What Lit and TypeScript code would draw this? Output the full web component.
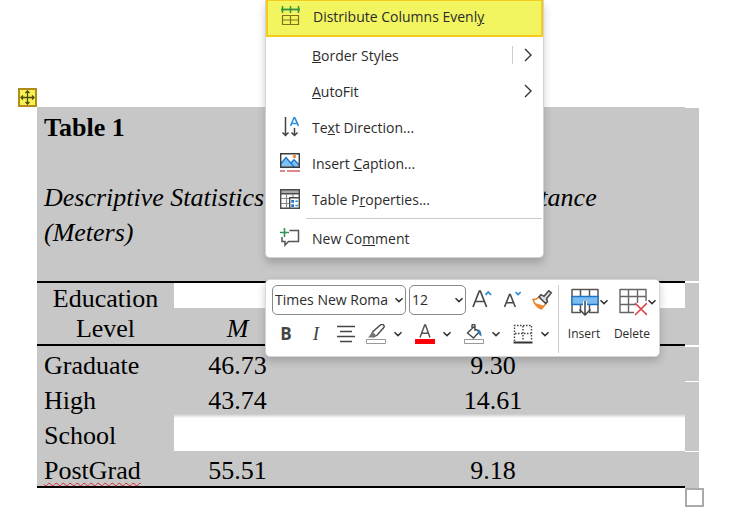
import { LitElement, html, svg, css, nothing, TemplateResult } from "lit";
import { customElement } from "lit/decorators.js";

const chevronDown = html`<svg class="chev" width="10" height="8" viewBox="0 0 10 8"><path d="M1.500 2.200 5 5.600l3.500-3.400" fill="none" stroke="#333" stroke-width="1.500"/></svg>`;
const chevronRight = html`<svg width="8" height="14" viewBox="0 0 8 14"><path d="M1 1l6 6-6 6" fill="none" stroke="#333" stroke-width="1.400"/></svg>`;

const icon = (size: number, body: TemplateResult<2>) =>
  html`<svg width=${size} height=${size} viewBox="0 0 ${size} ${size}" fill="none" aria-hidden="true">${body}</svg>`;

const distributeIcon = icon(20, svg`
  <path d="M0 3.500h19" stroke="#2f9440" stroke-width="1.800"/>
  <path d="M1.500 0v7M9.500 0v7M17.500 0v7" stroke="#2f9440" stroke-width="1.500"/>
  <path d="M1.500 9.500h16v9h-16zM9.500 9.500v9M1.500 14h16" stroke="#83741c" stroke-width="1.200"/>`);

const directionIcon = icon(20, svg`
  <path d="M5.500 0v18.500M2.500 15.500l3 3 3-3" stroke="#444" stroke-width="1.500"/>
  <path d="M14.500 11v7.500M11.500 15.500l3 3 3-3" stroke="#444" stroke-width="1.500"/>
  <path d="M10.500 9 14 .8h.8L18.500 9M11.800 6.500h5.400" stroke="#2f8fd6" stroke-width="1.600"/>`);

const captionIcon = icon(20, svg`
  <path d="M1 13.500V10l5-6 8.500 10H1z" fill="#7fc0f2"/><path d="M11 9.500l3-3 5 5V14h-4z" fill="#7fc0f2"/>
  <path d="M1 10.500l5-6 8.300 9.500M11 10l3-3.200 5 5" stroke="#1c74c4" stroke-width="1.300"/>
  <circle cx="14.500" cy="3.500" r="1.700" fill="#ee8b3a"/>
  <path d="M.7.700h18.600v13.600H.700z" stroke="#3b3b3b" stroke-width="1.400"/>
  <path d="M0 18h5M7 18h13" stroke="#d3606b" stroke-width="1.600"/>`);

const propertiesIcon = icon(20, svg`
  <path d="M1 1h18v3.500H1z" fill="#aaa"/>
  <path d="M.7.700h18.600v18.600H.700zM.7 4.700h18.600" stroke="#4a4a4a" stroke-width="1.400"/>
  <path d="M1 9.500h9M1 14.500h9M6.500 5v14M13 5v4" stroke="#888" stroke-width="1.200"/>
  <path d="M9 8h11v12H9z" fill="#fff"/>
  <path d="M9.700 8.700h9.600v10.600H9.700z" fill="#fff" stroke="#4a4a4a" stroke-width="1.400"/>
  <path d="M11.300 11h2.700v2.700h-2.700zM11.300 15.200h2.700v2.700h-2.700z" fill="#1c74c4"/>
  <path d="M15.300 12.300h2.700M15.300 16.500h2.700" stroke="#3a93dd" stroke-width="1.600"/>`);

const commentIcon = icon(20, svg`
  <path d="M9.500 2.500h9v11h-10l-3.500 3.700v-3.700H2V9" stroke="#555" stroke-width="1.500"/>
  <path d="M4.500 0v9M0 4.500h9" stroke="#34915a" stroke-width="1.600"/>`);

const growIcon = icon(22, svg`
  <path d="M2 18 8.300 2h1l6.300 16M4.400 12.500h8.800" stroke="#484848" stroke-width="1.700"/>
  <path d="M14.500 5.800 17.200 3 20 5.800" stroke="#2a8ad4" stroke-width="1.700"/>`);
const shrinkIcon = icon(22, svg`
  <path d="M3.500 18 8.500 5.500h.8l5 12.500M5.300 13.800h7.200" stroke="#484848" stroke-width="1.600"/>
  <path d="M14.500 3l2.600 2.600L19.700 3" stroke="#2a8ad4" stroke-width="1.700"/>`);
const brushIcon = icon(22, svg`
  <path d="M2 10.500c3 0 4.500-.8 6-2.500l7 6.500-4.500 5.500C6 18.500 3.500 15 2 10.500z" fill="#fff" stroke="#e5802c" stroke-width="1.500"/>
  <path d="M4 14l8.500 2.500-2 3.500C7.500 19 5.500 17 4 14z" fill="#ee8b2d"/>
  <path d="M8 8l2-2.300 3 1.600 4.800-5.600 2.500 2.200-4.800 5.800 1 2.800-1.800 2z" fill="#ddd" stroke="#444" stroke-width="1.500"/>`);

const alignIcon = icon(20, svg`<path d="M1 2.500h18M4 7.500h12M1 12.500h18M4 17.500h12" stroke="#444" stroke-width="1.400"/>`);
const highlightIcon = icon(20, svg`
  <path d="M5.500 10.500 7 7.500l8-7c2-.9 3.800 1 3 2.800l-7 8-3.500 1.700z" stroke="#484848" stroke-width="1.400"/>
  <path d="M6.500 8l4 3.500-3.500 2H2z" fill="#777"/>
  <path d="M.5 15.500h19v4H.500z" fill="#fff" stroke="#999"/>`);
const colorIcon = icon(20, svg`
  <path d="M5 13.500 9.700 1h.8L15 13.500M6.500 9.300h7.200" stroke="#555" stroke-width="1.500"/>
  <path d="M0 15h20v5H0z" fill="#fb0007"/>`);
const fillIcon = icon(20, svg`
  <path d="M9.500 3 3.500 9l6 5 5.500-6zM8 5V1.500c0-1.500 3-1.500 3 0V7" stroke="#484848" stroke-width="1.400"/>
  <path d="M13 5.500c3-.5 4.500 1.500 4.500 7-2-1-3-3-3.500-5z" fill="#2d7cb5"/>
  <path d="M.5 15.500h19v4H.500z" fill="#fff" stroke="#999"/>`);
const bordersIcon = icon(20, svg`
  <path d="M1.500 17V1.500h17V17M10 2v15M2 9.500h16" stroke="#444" stroke-width="1.400" stroke-dasharray="1.500 1.500"/>
  <path d="M.5 18.500h19" stroke="#333" stroke-width="2"/>`);

const insertIcon = icon(28, svg`
  <path d="M1 1.500h26M1 1v23.500h9M27 1v23.500h-9M9.500 1v7M18.500 1v7M9.500 17v7M18.500 17v7" stroke="#555" stroke-width="1.500"/>
  <path d="M1 8.500h26v8H1z" fill="#7cbcf0" stroke="#1c74c4" stroke-width="1.300"/>
  <path d="M14 13v14" stroke="#fff" stroke-width="4"/>
  <path d="M14 13v14M8.500 21.500 14 27l5.500-5.500" stroke="#444" stroke-width="1.500"/>`);
const deleteIcon = icon(28, svg`
  <path d="M1 1.500h26V13M1 1v23.500h14M1 8.500h26M1 16.500h16M9.500 1v23M18.500 1v14" stroke="#666" stroke-width="1.400"/>
  <path d="M16 15l12 12M28 15l-12 12" stroke="#e0424c" stroke-width="1.600"/>`);

const moveIcon = icon(15, svg`
  <path d="M7.500 1v13M1 7.500h13M5.500 3l2-2 2 2M5.500 12l2 2 2-2M3 5.500l-2 2 2 2M12 5.500l2 2-2 2" stroke="#4c4a10" stroke-width="1.300"/>`);

type Item = { before: string; key: string; after: string; icon?: TemplateResult; arrow?: boolean; split?: boolean; active?: boolean; rule?: boolean };

const items: Item[] = [
  { before: "Distribute Columns Evenl", key: "y", after: "", icon: distributeIcon, active: true },
  { before: "", key: "B", after: "order Styles", arrow: true, split: true },
  { before: "", key: "A", after: "utoFit", arrow: true },
  { before: "Te", key: "x", after: "t Direction...", icon: directionIcon },
  { before: "Insert ", key: "C", after: "aption...", icon: captionIcon },
  { before: "Table P", key: "r", after: "operties...", icon: propertiesIcon },
  { before: "New Co", key: "m", after: "ment", icon: commentIcon, rule: true },
];

@customElement("context-menu")
export class ContextMenu extends LitElement {
  static styles = css`
    :host {
      display: block;
      box-sizing: border-box;
      background: #fff;
      border: 1px solid #d2d2d2;
      border-top: 0;
      border-radius: 0 0 5px 5px;
      box-shadow: 0 5px 9px rgba(0, 0, 0, 0.2);
      padding-bottom: 1px;
    }
    .item {
      display: grid;
      grid-template-columns: 32px 1fr auto;
      align-items: center;
      box-sizing: border-box;
      width: 100%;
      height: 36px;
      padding: 0 11px 0 14px;
      border: 0;
      background: none;
      text-align: left;
      font: 14px/20px "Open Sans", "Noto Sans", sans-serif;
      color: #2b2b2b;
    }
    .text { padding-top: 2px; }
    .active {
      height: 37px;
      padding: 0 9px 4px 13px;
      border: 2px solid #f5cc1c;
      border-top-width: 1px;
      background: #f2f560;
    }
    .icon { display: flex; }
    .arrow { display: flex; align-items: center; height: 18px; padding-left: 11px; }
    .split { border-left: 1px solid #ccc; }
    .rule { margin: 1px 1px 1px 40px; border: 0; border-top: 1px solid #c8c8c8; }
  `;

  render() {
    return html`${items.map(
      (i) => html`
        ${i.rule ? html`<hr class="rule" />` : nothing}
        <button class="item ${i.active ? "active" : ""}" role="menuitem">
          <span class="icon">${i.icon ?? nothing}</span>
          <span class="text">${i.before}<u>${i.key}</u>${i.after}</span>
          ${i.arrow ? html`<span class="arrow ${i.split ? "split" : ""}">${chevronRight}</span>` : nothing}
        </button>`
    )}`;
  }
}

@customElement("mini-toolbar")
export class MiniToolbar extends LitElement {
  static styles = css`
    :host {
      display: flex;
      box-sizing: border-box;
      background: #fff;
      border: 1px solid #d6d6d6;
      border-radius: 5px;
      box-shadow: 0 4px 8px rgba(0, 0, 0, 0.2);
      padding: 5px 2px 3px 5px;
      font-family: "Open Sans", "Noto Sans", sans-serif;
      color: #2b2b2b;
    }
    .main { display: flex; flex-direction: column; gap: 4px; padding-right: 1px; }
    .row { display: flex; align-items: center; height: 30px; }
    .fonts { padding-left: 1px; }
    .combo { display: grid; align-items: center; margin-right: 3px; }
    .size { margin-right: 1px; }
    .combo > * { grid-area: 1 / 1; }
    .combo .chev { justify-self: end; margin-right: 2px; pointer-events: none; }
    select {
      appearance: none;
      box-sizing: border-box;
      width: 134px;
      height: 30px;
      padding: 0 16px 0 2px;
      border: 1px solid #8a8a8a;
      border-radius: 5px;
      background: #fff;
      color: #2b2b2b;
      font: 14px/20px "Open Sans", "Noto Sans", sans-serif;
    }
    .size select { width: 57px; }
    button {
      display: flex;
      align-items: center;
      justify-content: center;
      width: 30px;
      height: 30px;
      padding: 0;
      border: 0;
      background: none;
      color: #444;
      font: 17px/20px "Open Sans", "Noto Sans", sans-serif;
    }
    .bold { font-weight: 700; }
    .italic { font: italic 19px/20px "Liberation Serif", serif; }
    .more { width: 14px; margin-right: 5px; }
    .side { display: flex; border-left: 1px solid #ccc; padding-left: 2px; }
    .big {
      display: grid;
      grid-template-columns: 28px 10px;
      grid-template-rows: 34px 30px;
      justify-content: end;
      width: 48px;
      height: 68px;
    }
    .big .label { grid-column: 1 / 3; justify-self: center; margin-right: 12px; width: 46px; font-size: 12px; color: #2b2b2b; text-align: center; }
  `;

  private tool(label: string, body: unknown) {
    return html`<button aria-label=${label}>${body}</button>`;
  }
  private split(label: string, body: unknown) {
    return html`<button aria-label=${label}>${body}</button><button class="more" aria-label="${label} options">${chevronDown}</button>`;
  }

  render() {
    return html`
      <div class="main">
        <div class="row fonts">
          <div class="combo"><select aria-label="Font"><option>Times New Roman</option></select>${chevronDown}</div>
          <div class="combo size"><select aria-label="Font size"><option>12</option></select>${chevronDown}</div>
          ${this.tool("Grow font", growIcon)}${this.tool("Shrink font", shrinkIcon)}${this.tool("Format painter", brushIcon)}
        </div>
        <div class="row">
          <button class="bold">B</button>
          <button class="italic">I</button>
          ${this.tool("Center", alignIcon)}
          ${this.split("Highlight", highlightIcon)}
          ${this.split("Font color", colorIcon)}
          ${this.split("Shading", fillIcon)}
          ${this.split("Borders", bordersIcon)}
        </div>
      </div>
      <div class="side">
        <button class="big">${insertIcon}${chevronDown}<span class="label">Insert</span></button>
        <button class="big">${deleteIcon}${chevronDown}<span class="label">Delete</span></button>
      </div>`;
  }
}

@customElement("app-root")
export class AppRoot extends LitElement {
  static styles = css`
    :host {
      display: block;
      position: relative;
      min-height: 100vh;
      box-sizing: border-box;
      padding: 107px 30px 24px 37px;
      background: #fff;
      overflow: hidden;
    }
    .sheet { position: relative; }
    table {
      width: 100%;
      table-layout: fixed;
      border-collapse: separate;
      border-spacing: 0;
      background: #c7c7c7;
      color: #000;
      font: 26px/30px "Liberation Serif", serif;
    }
    .c1 { width: 137px; }
    .c2 { width: 127px; }
    .c4 { width: 14px; }
    th, td { padding: 0; font-weight: 400; vertical-align: top; text-align: center; }
    .left { padding-left: 7px; text-align: left; }
    .line { display: block; min-height: 30px; padding-top: 5px; }
    .title { height: 173px; padding-top: 1px; }
    .title b { font-weight: 700; }
    .name { display: flex; gap: 240px; font-style: italic; white-space: nowrap; }
    .head th { height: 61px; border-top: 2px solid #000; border-bottom: 2px solid #000; vertical-align: bottom; }
    .head .low { font-style: italic; background: linear-gradient(#fff 25px, #c7c7c7 25px); }
    .blank { background: linear-gradient(#c7c7c7 33px, #fff 37px); }
    .last th, .last td { border-bottom: 2px solid #000; }
    tr .end { border-top: 1px solid #fff; }
    .last .end { border-bottom: 0; }
    .head .end { border-top: 2px solid #fff; border-bottom: 1px solid #fff; }
    .typo { text-decoration: underline wavy #d8232f 1px; text-underline-offset: 3px; text-decoration-skip-ink: none; }
    .move, .resize { position: absolute; box-sizing: border-box; width: 19px; height: 19px; padding: 0; }
    .move {
      left: -19px;
      top: -19px;
      display: grid;
      place-items: center;
      border: 2px solid #b08c1c;
      background: #f7f251;
    }
    .resize { right: -5px; top: 100%; border: 2px solid #aaa; background: #fff; }
    context-menu { position: absolute; left: 265px; top: 0; width: 279px; }
    mini-toolbar { position: absolute; left: 265px; top: 279px; }
  `;

  render() {
    return html`
      <div class="sheet">
        <table>
          <colgroup><col class="c1" /><col class="c2" /><col /><col class="c4" /></colgroup>
          <tbody>
            <tr>
              <td class="left title" colspan="3">
                <b class="line">Table 1</b>
                <span class="line"></span>
                <span class="line name"><span>Descriptive Statistics</span><span>Distance</span></span>
                <i class="line">(Meters)</i>
              </td>
              <td class="end"></td>
            </tr>
            <tr class="head">
              <th scope="col">Education<br />Level</th>
              <th scope="col" class="low">M</th>
              <th class="low"></th>
              <td class="end"></td>
            </tr>
            <tr>
              <th scope="row" class="left"><span class="line">Graduate</span></th>
              <td><span class="line">46.73</span></td>
              <td><span class="line">9.30</span></td>
              <td class="end"></td>
            </tr>
            <tr>
              <th scope="row" class="left"><span class="line">High</span><span class="line">School</span></th>
              <td class="blank"><span class="line">43.74</span></td>
              <td class="blank"><span class="line">14.61</span></td>
              <td class="end"></td>
            </tr>
            <tr class="last">
              <th scope="row" class="left"><span class="line"><span class="typo">PostGrad</span></span></th>
              <td><span class="line">55.51</span></td>
              <td><span class="line">9.18</span></td>
              <td class="end"></td>
            </tr>
          </tbody>
        </table>
        <button class="move" aria-label="Move table"><span class="glyph">${moveIcon}</span></button>
        <button class="resize" aria-label="Resize table"></button>
      </div>
      <context-menu role="menu"></context-menu>
      <mini-toolbar role="toolbar"></mini-toolbar>`;
  }
}
